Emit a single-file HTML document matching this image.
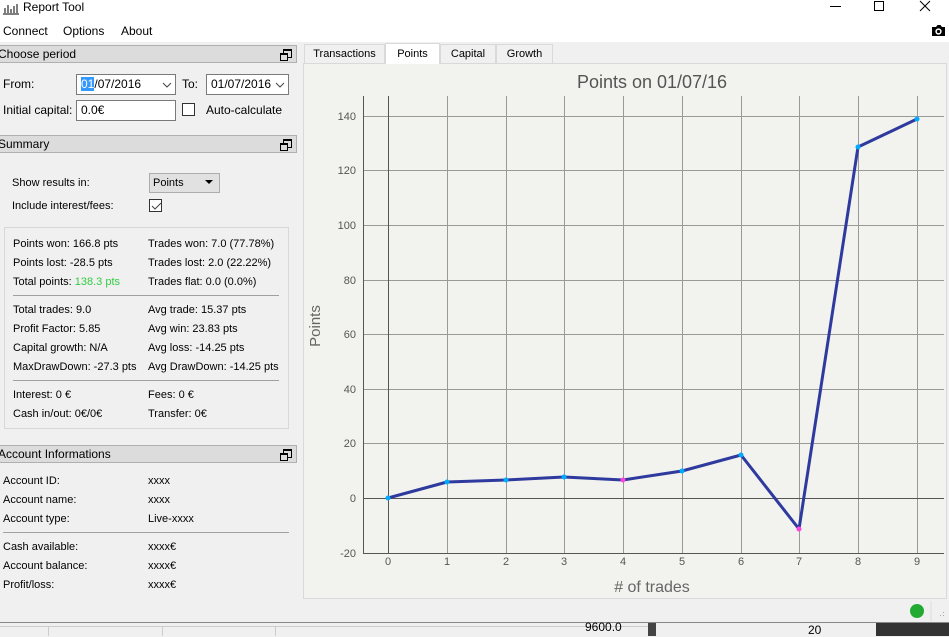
<!DOCTYPE html>
<html><head><meta charset="utf-8"><style>
*{box-sizing:border-box;margin:0;padding:0}
body{width:949px;height:636px;overflow:hidden;position:relative;background:#f0f0f0;font-family:"Liberation Sans",sans-serif;font-size:11px;color:#000}
.a{position:absolute;white-space:nowrap}
.hdr{position:absolute;left:-3px;width:300px;height:18px;background:#dcdcdc;border:1px solid #b0b0b0;font-size:12px;line-height:16px;padding-left:0;overflow:hidden}
.fl{position:absolute;right:4px;top:3px;width:9px;height:9px;border:1px solid #000;border-top-width:2px}
.fl:before{content:"";position:absolute;left:-4px;top:2px;width:6px;height:5px;border:1px solid #000;border-top-width:2px;background:#dcdcdc}
.inp{position:absolute;background:#fff;border:1px solid #7a7a7a;height:21px;font-size:12px;line-height:19px;padding-left:4px}
.sep{position:absolute;height:1px;background:#a0a0a0}
.t{font-size:11px}
</style></head><body>
<div class="a" style="left:0;top:0;width:949px;height:42px;background:#fff"></div>
<svg class="a" style="left:2px;top:1px" width="18" height="14"><path d="M1 13h16M3 12V7M6 12V4M9 12V8M12 12V5M15 12V3" stroke="#555" stroke-width="1.5"/></svg>
<div class="a" style="left:23px;top:0;font-size:12px">Report Tool</div>
<div class="a" style="left:830px;top:6px;width:11px;height:1px;background:#000"></div>
<div class="a" style="left:874px;top:1px;width:10px;height:10px;border:1px solid #000"></div>
<svg class="a" style="left:919px;top:0" width="12" height="12"><path d="M1 1L11 11M11 1L1 11" stroke="#000"/></svg>
<div class="a" style="left:3px;top:24px;font-size:12px">Connect</div>
<div class="a" style="left:63px;top:24px;font-size:12px">Options</div>
<div class="a" style="left:121px;top:24px;font-size:12px">About</div>
<svg class="a" style="left:931px;top:24px" width="15" height="13"><path d="M1 3h4l1.5-2h3L11 3h3v9H1z" fill="#000"/><circle cx="7.5" cy="7.5" r="2.4" fill="none" stroke="#fff" stroke-width="1.5"/></svg>

<div class="hdr" style="top:45px">Choose period<span class="fl"></span></div>
<div class="a" style="left:3px;top:77px;font-size:12px">From:</div>
<div class="inp" style="left:76px;top:74px;width:100px"><span style="background:#3399ff;color:#fff">01</span>/07/2016</div>
<svg class="a" style="left:162px;top:82px" width="10" height="6"><path d="M1 1l4 4 4-4" stroke="#444" fill="none"/></svg>
<div class="a" style="left:182px;top:77px;font-size:12px">To:</div>
<div class="inp" style="left:206px;top:74px;width:83px">01/07/2016</div>
<svg class="a" style="left:275px;top:82px" width="10" height="6"><path d="M1 1l4 4 4-4" stroke="#444" fill="none"/></svg>
<div class="a" style="left:3px;top:103px;font-size:12px">Initial capital:</div>
<div class="inp" style="left:76px;top:100px;width:100px">0.0€</div>
<div class="a" style="left:182px;top:103px;width:13px;height:13px;border:1px solid #333;background:#fff"></div>
<div class="a" style="left:206px;top:103px;font-size:12px">Auto-calculate</div>

<div class="hdr" style="top:135px">Summary<span class="fl"></span></div>
<div class="a" style="left:12px;top:177px">Show results in:</div>
<div class="a" style="left:149px;top:173px;width:71px;height:20px;border:1px solid #adadad;background:#e1e1e1;padding:3px 0 0 3px">Points</div>
<svg class="a" style="left:205px;top:180px" width="9" height="5"><path d="M0 0h8L4 4z" fill="#000"/></svg>
<div class="a" style="left:12px;top:200px">Include interest/fees:</div>
<div class="a" style="left:149px;top:199px;width:13px;height:13px;border:1px solid #333;background:#fff"></div>
<svg class="a" style="left:150px;top:200px" width="12" height="12"><path d="M2 6l3 3 6-6" stroke="#444" fill="none"/></svg>
<div class="a" style="left:4px;top:227px;width:285px;height:202px;border:1px solid #d8d8d8"></div>
<div class="a t" style="left:13px;top:238px">Points won: 166.8 pts</div>
<div class="a t" style="left:148px;top:238px">Trades won: 7.0 (77.78%)</div>
<div class="a t" style="left:13px;top:257px">Points lost: -28.5 pts</div>
<div class="a t" style="left:148px;top:257px">Trades lost: 2.0 (22.22%)</div>
<div class="a t" style="left:13px;top:276px">Total points: <span style="color:#33cc44">138.3 pts</span></div>
<div class="a t" style="left:148px;top:276px">Trades flat: 0.0 (0.0%)</div>
<div class="sep" style="left:13px;top:295px;width:266px"></div>
<div class="a t" style="left:13px;top:304px">Total trades: 9.0</div>
<div class="a t" style="left:148px;top:304px">Avg trade: 15.37 pts</div>
<div class="a t" style="left:13px;top:323px">Profit Factor: 5.85</div>
<div class="a t" style="left:148px;top:323px">Avg win: 23.83 pts</div>
<div class="a t" style="left:13px;top:342px">Capital growth: N/A</div>
<div class="a t" style="left:148px;top:342px">Avg loss: -14.25 pts</div>
<div class="a t" style="left:13px;top:361px">MaxDrawDown: -27.3 pts</div>
<div class="a t" style="left:148px;top:361px">Avg DrawDown: -14.25 pts</div>
<div class="sep" style="left:13px;top:380px;width:266px"></div>
<div class="a t" style="left:13px;top:389px">Interest: 0 €</div>
<div class="a t" style="left:148px;top:389px">Fees: 0 €</div>
<div class="a t" style="left:13px;top:408px">Cash in/out: 0€/0€</div>
<div class="a t" style="left:148px;top:408px">Transfer: 0€</div>

<div class="hdr" style="top:445px">Account Informations<span class="fl"></span></div>
<div class="a t" style="left:3px;top:475px">Account ID:</div><div class="a t" style="left:148px;top:475px">xxxx</div>
<div class="a t" style="left:3px;top:494px">Account name:</div><div class="a t" style="left:148px;top:494px">xxxx</div>
<div class="a t" style="left:3px;top:513px">Account type:</div><div class="a t" style="left:148px;top:513px">Live-xxxx</div>
<div class="sep" style="left:3px;top:532px;width:286px"></div>
<div class="a t" style="left:3px;top:541px">Cash available:</div><div class="a t" style="left:148px;top:541px">xxxx€</div>
<div class="a t" style="left:3px;top:560px">Account balance:</div><div class="a t" style="left:148px;top:560px">xxxx€</div>
<div class="a t" style="left:3px;top:579px">Profit/loss:</div><div class="a t" style="left:148px;top:579px">xxxx€</div>

<div class="a" style="left:304px;top:44px;width:81px;height:20px;border:1px solid #d9d9d9;background:#f0f0f0;text-align:center;line-height:19px">Transactions</div>
<div class="a" style="left:385px;top:43px;width:55px;height:21px;border:1px solid #d9d9d9;border-bottom:none;background:#fff;text-align:center;line-height:20px;z-index:2">Points</div>
<div class="a" style="left:440px;top:44px;width:56px;height:20px;border:1px solid #d9d9d9;background:#f0f0f0;text-align:center;line-height:19px">Capital</div>
<div class="a" style="left:496px;top:44px;width:57px;height:20px;border:1px solid #d9d9d9;background:#f0f0f0;text-align:center;line-height:19px">Growth</div>
<div class="a" style="left:303px;top:63px;width:644px;height:536px;border:1px solid #d9d9d9;background:#f2f2ee"></div>

<svg class="a" style="left:0;top:0" width="949" height="636" font-family="Liberation Sans, sans-serif">
<g stroke="#999" stroke-width="1">
<path d="M447.5 96V553M506.5 96V553M564.5 96V553M623.5 96V553M682.5 96V553M741.5 96V553M799.5 96V553M858.5 96V553M917.5 96V553"/>
<path d="M363 116.5H944M363 170.5H944M363 225.5H944M363 280.5H944M363 334.5H944M363 389.5H944M363 443.5H944"/>
</g>
<g stroke="#555" stroke-width="1"><path d="M363.5 96V553M388.5 96V553M363 498.5H944M363 553.5H944"/></g>
<g fill="#555" font-size="11" text-anchor="end">
<text x="356" y="120">140</text><text x="356" y="174">120</text><text x="356" y="229">100</text><text x="356" y="284">80</text><text x="356" y="338">60</text><text x="356" y="393">40</text><text x="356" y="447">20</text><text x="356" y="502">0</text><text x="356" y="557">-20</text>
</g>
<g fill="#555" font-size="11" text-anchor="middle">
<text x="388" y="565">0</text><text x="447" y="565">1</text><text x="506" y="565">2</text><text x="564" y="565">3</text><text x="623" y="565">4</text><text x="682" y="565">5</text><text x="741" y="565">6</text><text x="799" y="565">7</text><text x="858" y="565">8</text><text x="917" y="565">9</text>
</g>
<text x="652" y="88" font-size="18" fill="#555" text-anchor="middle">Points on 01/07/16</text>
<text x="652" y="592" font-size="16" fill="#666" text-anchor="middle"># of trades</text>
<text transform="translate(320 326) rotate(-90)" font-size="15" fill="#666" text-anchor="middle">Points</text>
<polyline points="388,498 447,482 506,480 564,477 623,480 682,471 741,455 799,529 858,147 917,119" fill="none" stroke="#2e3a9e" stroke-width="3" stroke-linejoin="round"/>
<g fill="#00aaff"><circle cx="388" cy="498" r="2.5"/><circle cx="447" cy="482" r="2.5"/><circle cx="506" cy="480" r="2.5"/><circle cx="564" cy="477" r="2.5"/><circle cx="682" cy="471" r="2.5"/><circle cx="741" cy="455" r="2.5"/><circle cx="858" cy="147" r="2.5"/><circle cx="917" cy="119" r="2.5"/></g>
<g fill="#ff44dd"><circle cx="623" cy="480" r="2.5"/><circle cx="799" cy="529" r="2.5"/></g>
<circle cx="917" cy="611" r="7" fill="#22aa33"/>
<path d="M931 601V621" stroke="#ddd"/>
<g fill="#aaa"><rect x="943" y="612" width="1" height="1"/><rect x="940" y="615" width="1" height="1"/><rect x="943" y="615" width="1" height="1"/></g>
</svg>

<div class="a" style="left:0;top:622px;width:949px;height:14px;background:#f0f0f0;border-top:1px solid #888"></div>
<div class="a" style="left:0;top:626px;width:650px;height:10px;border-top:1px solid #ccc"></div>
<div class="a" style="left:48px;top:626px;width:1px;height:10px;background:#ccc"></div>
<div class="a" style="left:162px;top:626px;width:1px;height:10px;background:#ccc"></div>
<div class="a" style="left:275px;top:626px;width:1px;height:10px;background:#ccc"></div>
<div class="a" style="left:585px;top:620px;font-size:12px">9600.0</div>
<div class="a" style="left:648px;top:623px;width:8px;height:13px;background:#444"></div>
<div class="a" style="left:808px;top:623px;font-size:12px">20</div>
<div class="a" style="left:876px;top:623px;width:73px;height:13px;background:#333"></div>
</body></html>
